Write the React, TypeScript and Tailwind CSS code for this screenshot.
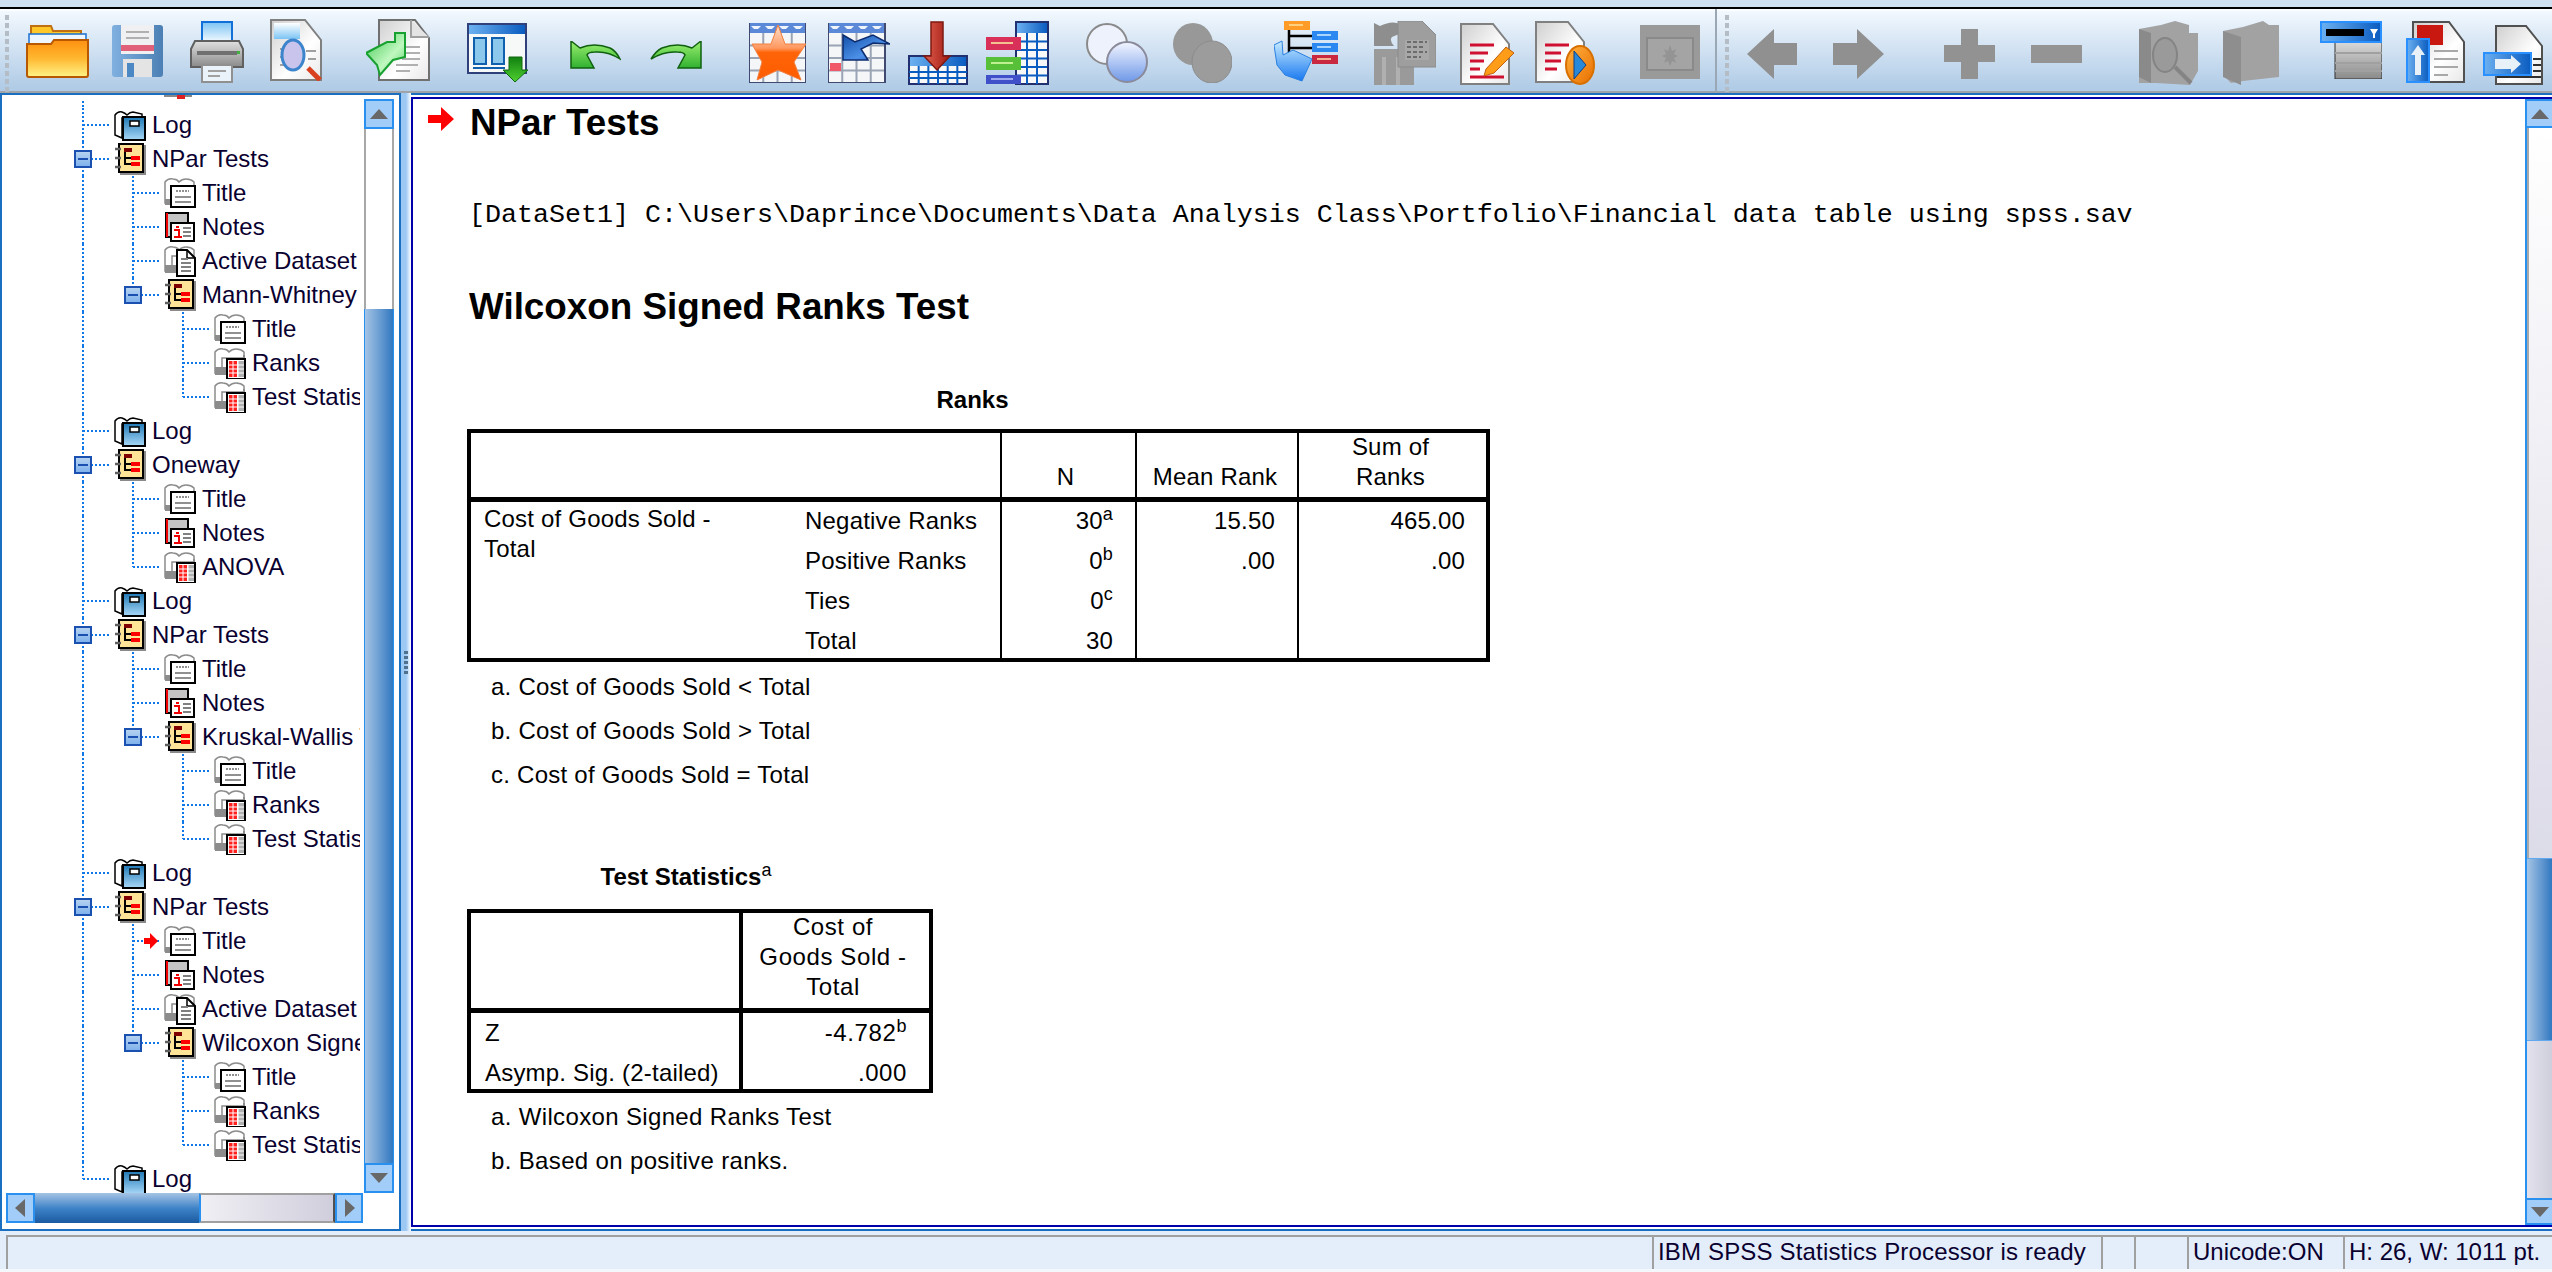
import type { ReactNode } from 'react';

type Kind = 'log' | 'outline' | 'title' | 'notes' | 'dataset' | 'table';

const TREE: { d: number; kind: Kind; label: string; mark?: boolean }[] = [
   { d: 0, kind: 'log', label: 'Log' },
   { d: 0, kind: 'outline', label: 'NPar Tests' },
   { d: 1, kind: 'title', label: 'Title' },
   { d: 1, kind: 'notes', label: 'Notes' },
   { d: 1, kind: 'dataset', label: 'Active Dataset' },
   { d: 1, kind: 'outline', label: 'Mann-Whitney Test' },
   { d: 2, kind: 'title', label: 'Title' },
   { d: 2, kind: 'table', label: 'Ranks' },
   { d: 2, kind: 'table', label: 'Test Statistics' },
   { d: 0, kind: 'log', label: 'Log' },
   { d: 0, kind: 'outline', label: 'Oneway' },
   { d: 1, kind: 'title', label: 'Title' },
   { d: 1, kind: 'notes', label: 'Notes' },
   { d: 1, kind: 'table', label: 'ANOVA' },
   { d: 0, kind: 'log', label: 'Log' },
   { d: 0, kind: 'outline', label: 'NPar Tests' },
   { d: 1, kind: 'title', label: 'Title' },
   { d: 1, kind: 'notes', label: 'Notes' },
   { d: 1, kind: 'outline', label: 'Kruskal-Wallis Test' },
   { d: 2, kind: 'title', label: 'Title' },
   { d: 2, kind: 'table', label: 'Ranks' },
   { d: 2, kind: 'table', label: 'Test Statistics' },
   { d: 0, kind: 'log', label: 'Log' },
   { d: 0, kind: 'outline', label: 'NPar Tests' },
   { d: 1, kind: 'title', label: 'Title', mark: true },
   { d: 1, kind: 'notes', label: 'Notes' },
   { d: 1, kind: 'dataset', label: 'Active Dataset' },
   { d: 1, kind: 'outline', label: 'Wilcoxon Signed Ranks Test' },
   { d: 2, kind: 'title', label: 'Title' },
   { d: 2, kind: 'table', label: 'Ranks' },
   { d: 2, kind: 'table', label: 'Test Statistics' },
   { d: 0, kind: 'log', label: 'Log' },
];

const Defs = () => (
   <svg className="absolute w-0 h-0">
      <defs>
         <linearGradient id="folder" x1="0" y1="0" x2="0" y2="1"><stop offset="0" stopColor="#ff9010" /><stop offset="0.5" stopColor="#ffb830" /><stop offset="1" stopColor="#fff488" /></linearGradient>
         <linearGradient id="disk" x1="0" y1="0" x2="1" y2="0"><stop offset="0" stopColor="#7fb0e0" /><stop offset="1" stopColor="#4c80b4" /></linearGradient>
         <linearGradient id="sheet" x1="0" y1="0" x2="1" y2="1"><stop offset="0" stopColor="#cfcfcf" /><stop offset="0.6" stopColor="#ffffff" /><stop offset="1" stopColor="#e8e8e8" /></linearGradient>
         <linearGradient id="paper" x1="0" y1="0" x2="0" y2="1"><stop offset="0" stopColor="#7cc4f4" /><stop offset="1" stopColor="#ffffff" /></linearGradient>
         <linearGradient id="steel" x1="0" y1="0" x2="0" y2="1"><stop offset="0" stopColor="#e0e0e0" /><stop offset="1" stopColor="#8a8a8a" /></linearGradient>
         <linearGradient id="head" x1="0" y1="0" x2="1" y2="0"><stop offset="0" stopColor="#6cb0f0" /><stop offset="1" stopColor="#0a5cc0" /></linearGradient>
         <linearGradient id="green" x1="0" y1="0" x2="0" y2="1"><stop offset="0" stopColor="#9cf070" /><stop offset="1" stopColor="#30b030" /></linearGradient>
         <linearGradient id="hand" x1="0" y1="0" x2="1" y2="1"><stop offset="0" stopColor="#40c850" /><stop offset="0.6" stopColor="#c0f8c0" /><stop offset="1" stopColor="#50d060" /></linearGradient>
         <linearGradient id="drop" x1="0" y1="0" x2="0" y2="1"><stop offset="0" stopColor="#108010" /><stop offset="1" stopColor="#50d030" /></linearGradient>
         <linearGradient id="star" x1="0" y1="0" x2="0" y2="1"><stop offset="0" stopColor="#ffe0cc" /><stop offset="0.42" stopColor="#ff9860" /><stop offset="0.5" stopColor="#ff6408" /><stop offset="1" stopColor="#ff5c00" /></linearGradient>
         <linearGradient id="sweep" x1="0" y1="0" x2="1" y2="1"><stop offset="0" stopColor="#1450a8" /><stop offset="0.6" stopColor="#4c90e8" /><stop offset="1" stopColor="#1c5cc0" /></linearGradient>
         <linearGradient id="funnel" x1="0" y1="0" x2="0" y2="1"><stop offset="0" stopColor="#c8ecff" /><stop offset="1" stopColor="#1878f0" /></linearGradient>
         <linearGradient id="red" x1="0" y1="0" x2="1" y2="0"><stop offset="0" stopColor="#e06050" /><stop offset="1" stopColor="#a01810" /></linearGradient>
         <linearGradient id="lens" x1="0" y1="0" x2="0" y2="1"><stop offset="0" stopColor="#f4f6ff" /><stop offset="1" stopColor="#6e98e8" /></linearGradient>
         <linearGradient id="logbook" x1="0" y1="0" x2="0" y2="1"><stop offset="0" stopColor="#1f78b4" /><stop offset="1" stopColor="#a8d8f8" /></linearGradient>
         <linearGradient id="minus" x1="0" y1="0" x2="0" y2="1"><stop offset="0" stopColor="#b8d4f0" /><stop offset="1" stopColor="#7cb0ec" /></linearGradient>
         <linearGradient id="ring" x1="0" y1="0" x2="1" y2="1"><stop offset="0" stopColor="#ffb040" /><stop offset="1" stopColor="#e87000" /></linearGradient>
      </defs>
   </svg>
);

const Ico = ({ cls, vb, children }: { cls: string; vb: string; children: ReactNode }) => (
   <svg className={`shrink-0 ${cls}`} viewBox={vb}>{children}</svg>
);

const Grip = ({ cls }: { cls: string }) => (
   <div className={`flex flex-col gap-[3px] w-[6px] pt-[3px] shrink-0 ${cls}`}>
      {Array.from({ length: 10 }, (_, i) => <span key={i} className="w-[4px] h-[5px] bg-[#b4bcc6]" />)}
   </div>
);

const GridLines = ({ x, y, w, h, cols, rows, c = '#0a5cc0' }: { x: number; y: number; w: number; h: number; cols: number; rows: number; c?: string }) => (
   <g stroke={c} strokeWidth="2">
      {Array.from({ length: cols - 1 }, (_, i) => <line key={i} x1={x + (w * (i + 1)) / cols} x2={x + (w * (i + 1)) / cols} y1={y} y2={y + h} />)}
      {Array.from({ length: rows - 1 }, (_, i) => <line key={i} x1={x} x2={x + w} y1={y + (h * (i + 1)) / rows} y2={y + (h * (i + 1)) / rows} />)}
   </g>
);

const CalendarBase = () => (
   <g>
      <rect x="0" y="0" width="57" height="60" fill="#f4f6f8" />
      <rect x="0" y="0" width="57" height="10" fill="#5c88d8" />
      {[7, 21, 35, 49].map(x => <path key={x} d={`M${x - 5} 3h10l-3 3h-4z`} fill="#f0f4fc" />)}
      <GridLines x={0} y={10} w={57} h={50} cols={4} rows={4} c="#9aa4b4" />
      <path d="M0 0v60h57V0" fill="none" stroke="#404a70" strokeWidth="2" />
   </g>
);

const Toolbar = () => (
   <div className="h-[82px] flex items-start bg-gradient-to-b from-[#f2f8fe] to-[#aecae5] border-t-2 border-[#fafdff]">
      <Grip cls="ml-[5px] mt-[1px]" />
      <Ico cls="ml-[15px] mt-[12px] w-[63px] h-[55px]" vb="0 0 63 55">
         <path d="M5 3h20l2 5h28v25H5z" fill="#ffc828" stroke="#c07010" strokeWidth="2" />
         <rect x="3" y="11" width="57" height="22" fill="#eef6ff" stroke="#1a70d0" strokeWidth="1.5" />
         <path d="M1 21h24l3-4h34v35a2 2 0 0 1-2 2H3a2 2 0 0 1-2-2z" fill="url(#folder)" stroke="#b85800" strokeWidth="2" />
      </Ico>
      <Ico cls="ml-[23px] mt-[14px] w-[51px] h-[52px]" vb="0 0 51 52">
         <rect width="51" height="52" rx="3" fill="url(#disk)" />
         <rect x="9" y="0" width="33" height="29" fill="#f0f0f2" />
         <path d="M14 7h23M14 13h23" stroke="#b0b0b0" strokeWidth="2" />
         <rect x="9" y="20" width="33" height="6" fill="#e0607a" />
         <rect x="11" y="34" width="29" height="18" fill="#e4e4e4" />
         <rect x="15" y="38" width="7" height="14" fill="#4c88c4" />
      </Ico>
      <Ico cls="ml-[27px] mt-[10px] w-[54px] h-[62px]" vb="0 0 54 62">
         <rect x="12" y="1" width="30" height="22" fill="url(#paper)" stroke="#1070d8" strokeWidth="2" />
         <path d="M5 20h44l4 8v18H1V28z" fill="url(#steel)" stroke="#606060" strokeWidth="2" />
         <rect x="7" y="30" width="40" height="4" fill="#707070" />
         <rect x="47" y="30" width="3" height="3" fill="#40b040" />
         <rect x="12" y="44" width="30" height="17" fill="#eaf2fa" stroke="#909090" strokeWidth="2" />
         <path d="M18 50h18M18 55h12" stroke="#a0a0a0" strokeWidth="2" />
      </Ico>
      <Ico cls="ml-[26px] mt-[8px] w-[56px] h-[62px]" vb="0 0 56 62">
         <path d="M1 1h34l16 20v40H1z" fill="url(#sheet)" stroke="#808080" strokeWidth="2" />
         <rect x="4" y="4" width="26" height="16" fill="url(#paper)" transform="rotate(180 17 12)" />
         <path d="M10 30h8M10 38h6M10 46h8M36 32h10M38 40h8" stroke="#a0a0a0" strokeWidth="2" />
         <ellipse cx="23" cy="36" rx="11" ry="15" fill="#c8c4ec" stroke="#3c84cc" strokeWidth="3" />
         <path d="M38 49l12 12" stroke="#d84020" strokeWidth="5" />
      </Ico>
      <Ico cls="ml-[40px] mt-[8px] w-[64px] h-[62px]" vb="0 0 64 62">
         <path d="M13 1h36l14 18v42H13z" fill="url(#sheet)" stroke="#707070" strokeWidth="2" />
         <path d="M45 1v17h18" fill="#e4e4e4" stroke="#a0a0a0" strokeWidth="2" />
         <path d="M38 28h16M38 34h16M36 40h18M30 46h22M30 52h14" stroke="#b0b0b0" strokeWidth="2" />
         <path d="M0 34L21 23h8v-9h10v24l-12 3-13 15-3-10z" fill="url(#hand)" stroke="#18a030" strokeWidth="2" />
      </Ico>
      <Ico cls="ml-[37px] mt-[12px] w-[61px] h-[60px]" vb="0 0 61 60">
         <rect x="1" y="1" width="58" height="49" fill="#f6f9f8" stroke="#30407a" strokeWidth="2" />
         <rect x="2" y="2" width="56" height="9" fill="url(#head)" />
         <rect x="7" y="15" width="12" height="26" fill="#8cc8ec" stroke="#1060b0" strokeWidth="2" />
         <rect x="25" y="15" width="12" height="26" fill="#8cc8ec" stroke="#1060b0" strokeWidth="2" />
         <rect x="6" y="44" width="32" height="2" fill="#1060b0" />
         <path d="M42 34h13v13h6L48 59 36 47h6z" fill="url(#drop)" stroke="#106810" strokeWidth="1" />
      </Ico>
      <Ico cls="ml-[42px] mt-[30px] w-[51px] h-[28px]" vb="0 0 51 28">
         <path d="M1 0l9 7q14-6 30 0 6 3 10 11-12-8-25-7-7 0-8 3l7 13H1z" fill="url(#green)" stroke="#106010" strokeWidth="1.5" />
      </Ico>
      <Ico cls="ml-[29px] mt-[30px] w-[52px] h-[28px]" vb="0 0 52 28">
         <path d="M51 0l-9 7Q28 1 12 7 6 10 1 18q13-8 26-7 7 0 8 3l-7 13h23z" fill="url(#green)" stroke="#106010" strokeWidth="1.5" />
      </Ico>
      <Ico cls="ml-[47px] mt-[12px] w-[57px] h-[60px]" vb="0 0 57 60">
         <CalendarBase />
         <path d="M29 2l7 19h21L45 39l7 18-23-10-21 10 5-18L3 21h19z" fill="url(#star)" stroke="#f08040" strokeWidth="1" />
      </Ico>
      <Ico cls="ml-[22px] mt-[12px] w-[62px] h-[60px]" vb="0 0 62 60">
         <CalendarBase />
         <rect x="2" y="40" width="11" height="8" fill="#f05868" />
         <path d="M15 12l12 7 18-7 17 9-17-1-12 6 7 11H15z" fill="url(#sweep)" stroke="#0c2c70" strokeWidth="1.5" />
      </Ico>
      <Ico cls="ml-[18px] mt-[10px] w-[60px] h-[64px]" vb="0 0 60 64">
         <rect x="1" y="35" width="58" height="28" fill="#f8f8f8" stroke="#203070" strokeWidth="2" />
         <rect x="2" y="36" width="56" height="9" fill="url(#head)" />
         <GridLines x={1} y={45} w={58} h={18} cols={6} rows={3} />
         <path d="M23 1h12v34h7l-13 14-13-14h7z" fill="url(#red)" stroke="#801810" strokeWidth="1.5" />
      </Ico>
      <Ico cls="ml-[18px] mt-[10px] w-[63px] h-[64px]" vb="0 0 63 64">
         <rect x="30" y="1" width="32" height="62" fill="#f8f8f8" stroke="#203070" strokeWidth="2" />
         <rect x="31" y="2" width="30" height="10" fill="url(#head)" />
         <GridLines x={31} y={12} w={30} h={51} cols={3} rows={6} />
         <rect x="0" y="16" width="35" height="13" fill="#d83058" />
         <rect x="5" y="21" width="22" height="2" fill="#f4c090" />
         <rect x="0" y="36" width="35" height="13" fill="#58c038" />
         <rect x="5" y="41" width="22" height="2" fill="#c0f090" />
         <rect x="0" y="54" width="35" height="9" fill="#4050c8" />
         <rect x="5" y="57" width="22" height="2" fill="#a0a8f0" />
      </Ico>
      <Ico cls="ml-[37px] mt-[12px] w-[62px] h-[60px]" vb="0 0 62 60">
         <ellipse cx="21" cy="21" rx="20" ry="20" fill="#eef2fc" stroke="#8a8a8a" strokeWidth="2" />
         <ellipse cx="41" cy="39" rx="20" ry="20" fill="url(#lens)" stroke="#8a8a9a" strokeWidth="2" />
      </Ico>
      <Ico cls="ml-[25px] mt-[12px] w-[59px] h-[60px]" vb="0 0 59 60">
         <ellipse cx="20" cy="21" rx="20" ry="21" fill="#989898" />
         <ellipse cx="39" cy="39" rx="20" ry="21" fill="#9c9c9c" stroke="#8c8c8c" strokeWidth="1" />
      </Ico>
      <Ico cls="ml-[42px] mt-[10px] w-[64px] h-[62px]" vb="0 0 64 62">
         <rect x="10" y="0" width="26" height="9" fill="#ff9c28" />
         <rect x="15" y="3" width="14" height="2" fill="#ffd080" />
         <path d="M15 9v28M15 15h24M15 27h24" stroke="#000" strokeWidth="2.5" fill="none" />
         <rect x="38" y="10" width="26" height="9" fill="#2a88f0" />
         <rect x="43" y="13" width="14" height="2" fill="#a8d4ff" />
         <rect x="38" y="22" width="26" height="9" fill="#2a88f0" />
         <rect x="43" y="25" width="14" height="2" fill="#a8d4ff" />
         <rect x="38" y="34" width="26" height="9" fill="#c82840" />
         <rect x="43" y="37" width="14" height="2" fill="#f4b090" />
         <path d="M0 24l8-4 1 14 10-5 19 9-10 22-17-6-8-10z" fill="url(#funnel)" stroke="#2a80e0" strokeWidth="1" />
      </Ico>
      <Ico cls="ml-[36px] mt-[10px] w-[62px] h-[64px]" vb="0 0 62 64">
         <path d="M0 2l6 3q12-6 20-2l4 8-12 5q-3 3 2 9H0z" fill="#8e8e8e" />
         <path d="M0 28h40v36H0z" fill="#9a9a9a" />
         <path d="M10 36v28M24 36v28" stroke="#b0b0b0" strokeWidth="4" />
         <path d="M24 0h24l14 14v32H24z" fill="#9e9e9e" stroke="#8a8a8a" strokeWidth="1" />
         <rect x="31" y="19" width="24" height="20" fill="#a8a8a8" />
         <path d="M33 21h20M33 26h16M33 31h20M33 36h14" stroke="#6c6c6c" strokeWidth="2" strokeDasharray="4 2" />
      </Ico>
      <Ico cls="ml-[24px] mt-[12px] w-[55px] h-[62px]" vb="0 0 55 62">
         <path d="M1 1h32l16 20v40H1z" fill="url(#sheet)" stroke="#808080" strokeWidth="2" />
         <path d="M10 22h24M10 30h18M10 38h14M10 46h10M10 54h34" stroke="#d01030" strokeWidth="3" />
         <path d="M26 46l20-22 8 6-20 20-10 3z" fill="#ff9c18" stroke="#c06010" strokeWidth="1" />
      </Ico>
      <Ico cls="ml-[20px] mt-[10px] w-[60px] h-[64px]" vb="0 0 60 64">
         <path d="M1 1h32l16 20v40H1z" fill="url(#sheet)" stroke="#808080" strokeWidth="2" />
         <path d="M10 24h24M10 32h16M10 40h16M10 48h12" stroke="#d01030" strokeWidth="3" />
         <ellipse cx="45" cy="44" rx="14" ry="19" fill="url(#ring)" stroke="#d87000" strokeWidth="2" />
         <path d="M39 30l12 14-12 14z" fill="#2a88d8" stroke="#104080" strokeWidth="1" />
      </Ico>
      <Ico cls="ml-[45px] mt-[14px] w-[60px] h-[54px]" vb="0 0 60 54">
         <rect width="60" height="54" fill="#9a9a9a" />
         <rect x="7" y="13" width="46" height="32" fill="#a4a4a4" stroke="#8a8a8a" strokeWidth="2" />
         <path d="M30 20l2 6 4-2-2 5 4 2-4 2 2 5-4-2-2 5-2-5-4 2 2-5-4-2 4-2-2-5 4 2z" fill="#949494" />
      </Ico>
      <div className="ml-[15px] w-[2px] h-[82px] -mt-[2px] bg-[#9aa8b6] shrink-0" />
      <Grip cls="ml-[8px] mt-[1px]" />
      <Ico cls="ml-[16px] mt-[18px] w-[50px] h-[50px]" vb="0 0 50 50">
         <path d="M27 0v14h23v22H27v14L0 25z" fill="#909090" />
      </Ico>
      <Ico cls="ml-[36px] mt-[18px] w-[51px] h-[50px]" vb="0 0 51 50">
         <path d="M24 0v14H0v22h24v14l27-25z" fill="#909090" />
      </Ico>
      <Ico cls="ml-[60px] mt-[18px] w-[51px] h-[50px]" vb="0 0 51 50">
         <path d="M17 0h17v16h17v17H34v17H17V33H0V16h17z" fill="#929292" />
      </Ico>
      <Ico cls="ml-[36px] mt-[34px] w-[51px] h-[18px]" vb="0 0 51 18">
         <rect width="51" height="18" fill="#949494" />
      </Ico>
      <Ico cls="ml-[57px] mt-[10px] w-[59px] h-[64px]" vb="0 0 59 64">
         <path d="M0 8l22-4 14-4 14 4v8h9v38l-8 14-34-2-17 0z" fill="#a2a2a2" />
         <path d="M0 8l12 4v50l-12-6z" fill="#8a8a8a" />
         <ellipse cx="26" cy="34" rx="12" ry="17" fill="#9a9a9a" stroke="#848484" strokeWidth="2" />
         <path d="M36 46l16 16" stroke="#848484" strokeWidth="4" />
      </Ico>
      <Ico cls="ml-[25px] mt-[10px] w-[56px] h-[64px]" vb="0 0 56 64">
         <path d="M0 10l20-4 20-6 6 4h10v52l-36 4-12 2-8-8z" fill="#a2a2a2" />
         <path d="M0 10l18 6v48l-18-8z" fill="#8e8e8e" />
      </Ico>
      <Ico cls="ml-[41px] mt-[10px] w-[62px] h-[58px]" vb="0 0 62 58">
         <rect x="15" y="18" width="47" height="40" fill="url(#steel)" stroke="#303030" strokeWidth="1" />
         <path d="M15 32h47M15 42h47M15 50h47" stroke="#a0a0a0" strokeWidth="2" />
         <rect x="1" y="1" width="60" height="20" fill="url(#head)" stroke="#2a90ff" strokeWidth="2" />
         <rect x="6" y="8" width="38" height="7" fill="#000" />
         <path d="M50 8h8l-3 5v4h-2v-4z" fill="#fff" />
      </Ico>
      <Ico cls="ml-[24px] mt-[10px] w-[59px] h-[62px]" vb="0 0 59 62">
         <path d="M7 1h36l15 20v40H7z" fill="url(#sheet)" stroke="#505050" strokeWidth="2" />
         <rect x="11" y="4" width="26" height="20" fill="#c81810" />
         <path d="M28 30h24M28 38h24M28 46h24M28 54h14" stroke="#a8a8a8" strokeWidth="2" />
         <rect x="1" y="18" width="22" height="43" fill="url(#head)" stroke="#2a90ff" strokeWidth="2" />
         <path d="M12 24l7 10h-4v20H9V34H5z" fill="#e8f0f8" />
      </Ico>
      <Ico cls="ml-[18px] mt-[14px] w-[61px] h-[60px]" vb="0 0 61 60">
         <path d="M13 1h30l16 20v38H13z" fill="url(#sheet)" stroke="#505050" strokeWidth="2" />
         <path d="M50 34h8M50 40h8M50 46h8M14 52h44" stroke="#303030" strokeWidth="2" />
         <rect x="1" y="28" width="47" height="22" fill="url(#head)" stroke="#2a90ff" strokeWidth="2" />
         <path d="M12 34h16v-4l10 9-10 9v-4H12z" fill="#e8f0f8" />
      </Ico>
   </div>
);

const BookBack = () => (
   <path d="M1 26V5q3-4 8-3 4 0 6 3 3-3 7-3 5 0 8 3v6H8v16z" fill="#fff" stroke="#8c8c8c" strokeWidth="1.5" />
);

const TreeIcon = ({ kind }: { kind: Kind }) => {
   if (kind === 'log') return (
      <svg className="w-[32px] h-[32px] shrink-0" viewBox="0 0 32 32">
         <path d="M1 26V6q3-4 7-3 3 1 5 3 3-3 6-3l9 2v4H8v20z" fill="#fff" stroke="#000" strokeWidth="1.5" />
         <rect x="9" y="8" width="22" height="23" fill="url(#logbook)" stroke="#000" strokeWidth="2" />
         <rect x="16" y="12" width="9" height="5" fill="#fff" stroke="#000" strokeWidth="1.5" />
      </svg>
   );
   if (kind === 'outline') return (
      <svg className="w-[32px] h-[32px] shrink-0" viewBox="0 0 32 32">
         <rect x="6" y="2" width="26" height="30" fill="#8a8a8a" />
         <rect x="5" y="1" width="24" height="28" fill="#ffe498" stroke="#000" strokeWidth="2" />
         <path d="M1 6h6M1 15h6M1 24h6" stroke="#606060" strokeWidth="2.5" />
         <rect x="10" y="5" width="8" height="4" fill="#800000" />
         <path d="M11 9v13M11 15h6M11 21h6" stroke="#000" strokeWidth="2" />
         <rect x="17" y="13" width="9" height="4" fill="#ff0000" />
         <rect x="17" y="19" width="9" height="4" fill="#ff0000" />
      </svg>
   );
   if (kind === 'title') return (
      <svg className="w-[32px] h-[32px] shrink-0" viewBox="0 0 32 32">
         <BookBack />
         <path d="M1 22v6h7v-6z" fill="#8c8c8c" />
         <rect x="7" y="9" width="24" height="21" fill="#fff" stroke="#000" strokeWidth="2" />
         <path d="M12 14h13" stroke="#909090" strokeWidth="2" strokeDasharray="2 1" />
         <path d="M11 20h16M11 25h16" stroke="#909090" strokeWidth="2" />
      </svg>
   );
   if (kind === 'notes') return (
      <svg className="w-[32px] h-[32px] shrink-0" viewBox="0 0 32 32">
         <rect x="2" y="2" width="22" height="24" fill="#c4c4c4" stroke="#000" strokeWidth="2" />
         <rect x="2" y="2" width="2" height="24" fill="#f00000" />
         <rect x="7" y="12" width="23" height="18" fill="#fff" stroke="#000" strokeWidth="2" />
         <rect x="12" y="15" width="3" height="2" fill="#f00000" />
         <path d="M10 19h5v6M10 26h8" stroke="#f00000" strokeWidth="2" fill="none" />
         <path d="M19 17h8M19 21h8M19 25h8" stroke="#808080" strokeWidth="2" />
      </svg>
   );
   if (kind === 'dataset') return (
      <svg className="w-[32px] h-[32px] shrink-0" viewBox="0 0 32 32">
         <BookBack />
         <path d="M1 20v8h12v-8z" fill="#8c8c8c" />
         <path d="M13 5h10l8 8v18H13z" fill="#fff" stroke="#000" strokeWidth="2" />
         <path d="M23 5v8h8" fill="none" stroke="#000" strokeWidth="1.5" />
         <path d="M17 14h7M17 18h10M17 22h10M17 26h10" stroke="#808080" strokeWidth="2" />
      </svg>
   );
   return (
      <svg className="w-[32px] h-[32px] shrink-0" viewBox="0 0 32 32">
         <BookBack />
         <path d="M1 20v8h12v-8zM29 8h2v22h-2z" fill="#8c8c8c" />
         <rect x="13" y="12" width="18" height="20" fill="#fff" stroke="#000" strokeWidth="2" />
         <rect x="15" y="14" width="8" height="16" fill="#ff2020" />
         <rect x="24" y="14" width="6" height="16" fill="#b0b0b0" />
         <path d="M14 18h16M14 22h16M14 26h16M19 14v16M24 14v16" stroke="#fff" strokeWidth="1" />
      </svg>
   );
};

const continues = (i: number, level: number) => {
   for (let j = i + 1; j < TREE.length; j++) {
      if (TREE[j].d < level) return false;
      if (TREE[j].d === level) return true;
   }
   return false;
};

const DOT = { stroke: '#0f78e8', strokeWidth: 2, strokeDasharray: '2 2', fill: 'none' };

const TreeRow = ({ i }: { i: number }) => {
   const { d, kind, label, mark } = TREE[i];
   const open = TREE[i + 1] && TREE[i + 1].d > d;
   const bx = 81 + 50 * d;
   const levels = Array.from({ length: d + 1 }, (_, l) => l);
   return (
      <div className="flex items-center h-[34px] whitespace-nowrap">
         <svg className="shrink-0" width={112 + 50 * d} height="34">
            {levels.map(l => {
               const more = continues(i, l);
               const x = 81 + 50 * l;
               if (l < d) return more ? <line key={l} x1={x} x2={x} y1="0" y2="34" {...DOT} /> : null;
               return <line key={l} x1={x} x2={x} y1="0" y2={more ? 34 : 17} {...DOT} />;
            })}
            <line x1={bx} x2={bx + 28} y1="17" y2="17" {...DOT} />
            {open && (
               <g>
                  <rect x={bx - 8} y="9" width="16" height="16" fill="url(#minus)" stroke="#1a50b0" strokeWidth="2" />
                  <line x1={bx - 5} x2={bx + 5} y1="17" y2="17" stroke="#1a50b0" strokeWidth="2" />
               </g>
            )}
            {mark && <path d="M142 14h6v-5l8 8-8 8v-5h-6z" fill="#ff0000" />}
         </svg>
         <TreeIcon kind={kind} />
         <span className="ml-[6px] text-[24px] leading-[34px] text-[#0a0030]">{label}</span>
      </div>
   );
};

const Tri = ({ dir }: { dir: 'up' | 'down' | 'left' | 'right' }) => {
   const d = { up: 'M0 14L9 4l9 10z', down: 'M0 4l9 10 9-10z', left: 'M13 0v18L3 9z', right: 'M5 0v18l10-9z' }[dir];
   return <svg width="18" height="18" viewBox="0 0 18 18"><path d={d} fill="#686868" /></svg>;
};

const ScrollBtn = ({ dir, cls }: { dir: 'up' | 'down' | 'left' | 'right'; cls: string }) => (
   <div className={`shrink-0 grid place-items-center bg-[#a2cdf8] border-2 border-[#2a90f0] ${cls}`}>
      <Tri dir={dir} />
   </div>
);

const Tree = () => (
   <div className="w-[401px] h-[1138px] shrink-0 flex flex-col border-2 border-[#1a6fc0] bg-white">
      <div className="flex h-[1098px]">
         <div className="w-[358px] mr-[4px] overflow-hidden">
            <svg className="block" width="358" height="13">
               <line x1="81" x2="81" y1="6" y2="13" {...DOT} />
               <rect x="162" y="0" width="28" height="2" fill="#888" />
               <rect x="175" y="0" width="8" height="4" fill="#e02020" />
            </svg>
            {TREE.map((_, i) => <TreeRow key={i} i={i} />)}
         </div>
         <div className="w-[30px] mt-[4px] flex flex-col">
            <ScrollBtn dir="up" cls="h-[30px]" />
            <div className="h-[180px] bg-white border-x-2 border-x-[#a8a8a8]" />
            <div className="flex-1 bg-gradient-to-r from-[#a4c4e4] to-[#2f78c0] border-x border-x-[#2a90f0]" />
            <ScrollBtn dir="down" cls="h-[30px]" />
         </div>
      </div>
      <div className="ml-[4px] w-[357px] h-[30px] flex">
         <ScrollBtn dir="left" cls="w-[29px]" />
         <div className="w-[164px] bg-gradient-to-b from-[#a4c4e4] via-[#3f84c8] to-[#1a5aa0]" />
         <div className="w-[136px] bg-gradient-to-r from-[#f0eff4] to-[#d0cedc] border-y-2 border-y-[#a0a0a0] border-x-2 border-x-[#2a90f0] border-r-[#505050]" />
         <ScrollBtn dir="right" cls="flex-1" />
      </div>
   </div>
);

const Sup = ({ children }: { children: ReactNode }) => (
   <sup className="text-[18px] leading-none font-normal align-baseline">{children}</sup>
);

const RanksTable = () => (
   <div className="w-[1023px] h-[233px] border-4 border-black grid grid-cols-[321px_208px_135px_162px_1fr] grid-rows-[69px_1fr] tracking-[0.2px]">
      <div className="col-span-2 border-b-[5px] border-black" />
      <div className="border-b-[5px] border-l-2 border-black flex items-end justify-center leading-[30px] pb-[5px] pr-[6px]">N</div>
      <div className="border-b-[5px] border-l-2 border-black flex items-end justify-center leading-[30px] pb-[5px] pr-[4px]">Mean Rank</div>
      <div className="border-b-[5px] border-l-2 border-black flex flex-col items-center justify-end leading-[30px] pb-[5px] pr-[4px]">
         <span>Sum of</span>
         <span>Ranks</span>
      </div>
      <div className="pl-[13px] pr-[60px] leading-[30px] pt-[2px]">Cost of Goods Sold - Total</div>
      <div className="pl-[13px] leading-[40px] -mt-[1px]">
         <div>Negative Ranks</div>
         <div>Positive Ranks</div>
         <div>Ties</div>
         <div>Total</div>
      </div>
      <div className="border-l-2 border-black pr-[22px] text-right leading-[40px]">
         <div className="-mt-[1px]">30<Sup>a</Sup></div>
         <div>0<Sup>b</Sup></div>
         <div>0<Sup>c</Sup></div>
         <div>30</div>
      </div>
      <div className="border-l-2 border-black pr-[22px] text-right leading-[40px]">
         <div className="-mt-[1px]">15.50</div>
         <div>.00</div>
      </div>
      <div className="border-l-2 border-black pr-[21px] text-right leading-[40px]">
         <div className="-mt-[1px]">465.00</div>
         <div>.00</div>
      </div>
   </div>
);

const StatsTable = () => (
   <div className="w-[466px] h-[184px] border-4 border-black grid grid-cols-[268px_1fr] grid-rows-[100px_1fr] tracking-[0.6px]">
      <div className="border-b-[5px] border-black" />
      <div className="border-b-[5px] border-l-4 border-black text-center leading-[30px] -mt-[1px] pr-[6px]">
         <div>Cost of</div>
         <div>Goods Sold -</div>
         <div>Total</div>
      </div>
      <div className="pl-[14px] leading-[40px] tracking-[0.2px]">
         <div>Z</div>
         <div>Asymp. Sig. (2-tailed)</div>
      </div>
      <div className="border-l-4 border-black pr-[22px] text-right leading-[40px]">
         <div>-4.782<Sup>b</Sup></div>
         <div>.000</div>
      </div>
   </div>
);

const Output = () => (
   <div className="flex-1 h-[1138px] border-y-2 border-[#1a6fc0] bg-white py-[2px]">
      <div className="h-full flex border-2 border-r-0 border-[#0000aa]">
         <div className="flex-1 pl-[54px] text-[24px] text-black">
            <div className="h-[46px] flex items-center -ml-[39px] text-[36.8px] font-bold pt-[2px]">
               <svg className="mr-[16px] -mt-[8px]" width="26" height="24" viewBox="0 0 26 24"><path d="M0 8h13V0l13 12-13 12v-8H0z" fill="#ff0000" /></svg>
               NPar Tests
            </div>
            <div className="mt-[55px] h-[30px] ml-[2px] font-['Liberation_Mono',monospace] text-[26.67px] leading-[30px] whitespace-nowrap">[DataSet1] C:\Users\Daprince\Documents\Data Analysis Class\Portfolio\Financial data table using spss.sav</div>
            <div className="mt-[57px] h-[40px] ml-[2px] text-[36.8px] leading-[40px] font-bold">Wilcoxon Signed Ranks Test</div>
            <div className="mt-[58px] h-[30px] w-[1023px] pr-[12px] text-center leading-[30px] font-bold">Ranks</div>
            <div className="mt-[14px]"><RanksTable /></div>
            <div className="mt-[3px] ml-[24px] leading-[44px] tracking-[0.25px]">
               <div>a. Cost of Goods Sold &lt; Total</div>
               <div>b. Cost of Goods Sold &gt; Total</div>
               <div>c. Cost of Goods Sold = Total</div>
            </div>
            <div className="mt-[64px] h-[32px] w-[466px] pr-[28px] text-center leading-[32px] font-bold">Test Statistics<Sup>a</Sup></div>
            <div className="mt-[16px]"><StatsTable /></div>
            <div className="mt-[2px] ml-[24px] leading-[44px] tracking-[0.35px]">
               <div>a. Wilcoxon Signed Ranks Test</div>
               <div>b. Based on positive ranks.</div>
            </div>
         </div>
         <div className="w-[27px] shrink-0 flex flex-col border-l-2 border-[#2a90f0]">
            <ScrollBtn dir="up" cls="h-[29px] border-x-0" />
            <div className="h-[730px] bg-gradient-to-b from-white to-[#dcdbe8] border-l-2 border-[#a8a8a8]" />
            <div className="h-[183px] bg-gradient-to-r from-[#a4c4e4] to-[#2f78c0] border-y border-[#60a8f0]" />
            <div className="flex-1 bg-gradient-to-r from-[#e2e1ec] to-[#cfcedc]" />
            <ScrollBtn dir="down" cls="h-[27px] border-x-0" />
         </div>
      </div>
   </div>
);

const Status = () => {
   const cell = 'border-t-2 border-l-2 border-[#a0a0a0] whitespace-nowrap overflow-hidden leading-[30px] pl-[4px]';
   return (
      <div className="h-[39px] flex pl-[6px] pt-[2px] bg-[#e3eefa] border-b-[3px] border-[#f4f8fd] text-[24px] text-[#0a0030]">
         <div className={`w-[1646px] ${cell}`} />
         <div className={`w-[449px] tracking-[0.17px] ${cell}`}>IBM SPSS Statistics Processor is ready</div>
         <div className={`w-[33px] ${cell}`} />
         <div className={`w-[53px] ${cell}`} />
         <div className={`w-[156px] ${cell}`}>Unicode:ON</div>
         <div className={`flex-1 ${cell}`}>H: 26, W: 1011 pt.</div>
      </div>
   );
};

const App = () => (
   <div className="w-[2552px] h-[1272px] overflow-hidden bg-[#e3eefa] font-['Liberation_Sans',Arial,sans-serif]">
      <Defs />
      <div className="h-[7px] bg-[#cfe0f0]" />
      <div className="h-[2px] bg-black" />
      <Toolbar />
      <div className="h-[2px] bg-[#a0a4a8]" />
      <div className="h-[1140px] flex">
         <Tree />
         <div className="w-[10px] h-[1138px] shrink-0 flex flex-col items-center justify-center gap-[2px] bg-gradient-to-r from-[#9cc8f4] via-[#9cc8f4] to-white">
            {[0, 1, 2, 3, 4].map(i => <span key={i} className="w-[4px] h-[3px] bg-[#50708c]" />)}
         </div>
         <Output />
      </div>
      <Status />
   </div>
);

export default App;
